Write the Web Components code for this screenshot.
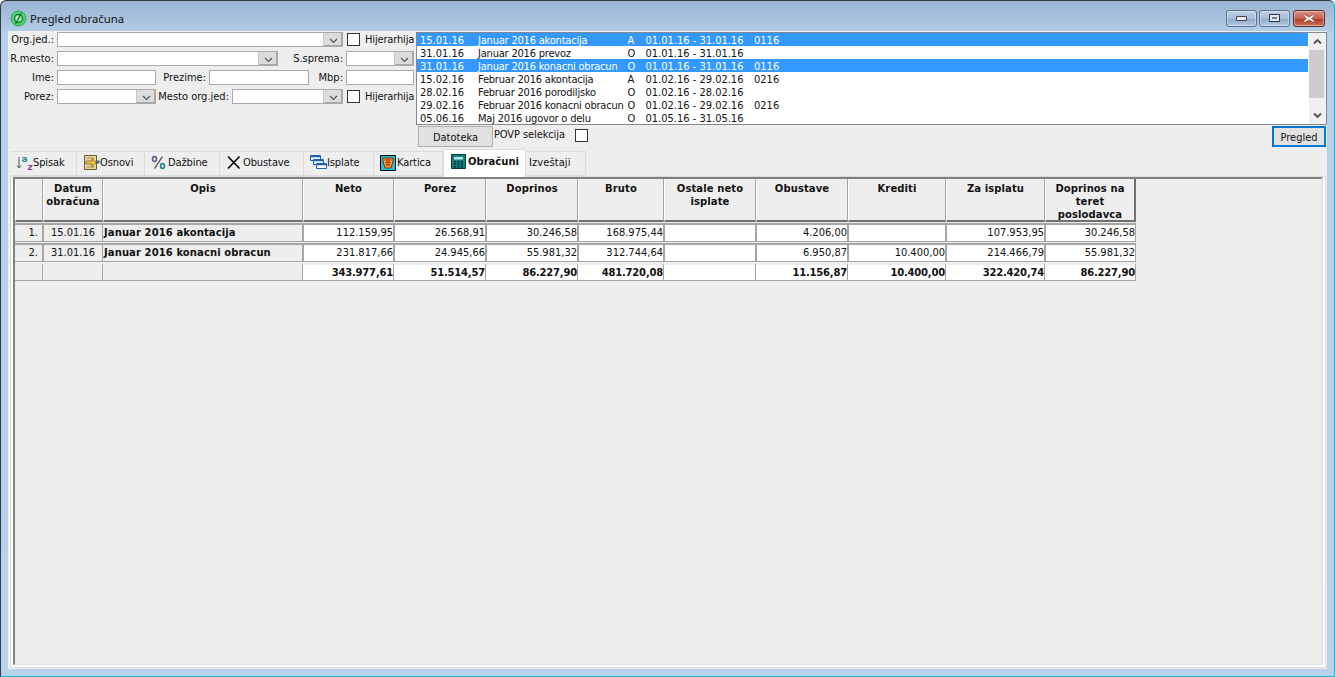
<!DOCTYPE html>
<html lang="sr">
<head>
<meta charset="UTF-8">
<title>Pregled obračuna</title>
<style>
    html, body { margin: 0; height: 100%; overflow: hidden; }
    body { font: 11px "DejaVu Sans Condensed", "DejaVu Sans", sans-serif; color: #111; }
</style>
</head>
<body>
<app-window title="Pregled obračuna">
    <filter-form></filter-form>
    <payroll-list slot="side"></payroll-list>
    <div slot="actions" style="display:contents">
        <ui-button>Datoteka</ui-button>
        <span style="margin-left:1px;width:81px;padding-top:2px;align-self:flex-start;letter-spacing:-.1px">POVP selekcija</span>
        <ui-check style="margin-top:3px;align-self:flex-start"></ui-check>
        <span style="flex:1"></span>
        <ui-button primary>Pregled</ui-button>
    </div>
    <tab-bar slot="tabs">
        <tab-item w="67"><svg slot="icon" width="17" height="18" viewBox="0 0 17 18"><path d="M3 3v11M1 11.500l2 2.500 2-2.500" fill="none" stroke="#555" stroke-width="1"/><text x="5.500" y="8" font-family="DejaVu Sans" font-weight="700" font-size="9" fill="#1a8f8f">a</text><text x="11.500" y="16" font-family="DejaVu Sans" font-weight="700" font-size="9" fill="#8a3f98">z</text></svg>Spisak</tab-item>
        <tab-item w="68"><svg slot="icon" width="17" height="17" viewBox="0 0 17 17"><path d="M1.500 1.500h12v14h-12z" fill="#ecd9a4" stroke="#6b5a2c"/><path d="M3.500 4h8M3.500 13h8" stroke="#a58a48"/><path d="M3 7h6V4.500l4.500 4-4.500 4V10H3z" fill="#f4c542" stroke="#7a5a16" stroke-width=".8"/><path d="M14 6.500h2.500v3H14z" fill="#2a6fc0"/></svg>Osnovi</tab-item>
        <tab-item w="75"><svg slot="icon" width="17" height="17" viewBox="0 0 17 17"><ellipse cx="3.500" cy="5" rx="2" ry="2.400" fill="none" stroke="#6a4a9c" stroke-width="1.500"/><ellipse cx="11.500" cy="12" rx="2" ry="2.400" fill="none" stroke="#1a7f8f" stroke-width="1.500"/><path d="M11.500 2.500L3.500 14.500" stroke="#444" stroke-width="1.300"/></svg>Dažbine</tab-item>
        <tab-item w="84"><svg slot="icon" width="17" height="17" viewBox="0 0 17 17"><path d="M2 2.500l11.500 12M13.500 2.500L2 14.500" stroke="#000" stroke-width="1.600"/></svg>Obustave</tab-item>
        <tab-item w="70"><svg slot="icon" width="17" height="17" viewBox="0 0 17 17"><g fill="#eef3fa" stroke="#1f5fae"><path d="M.5 1.500h10v5H.5z"/><path d="M3.500 5.500h10v5h-10z"/><path d="M6.500 9.500h10v5h-10z" fill="#fff"/></g><path d="M1 2.500h9M4 6.500h9M7 10.500h9" stroke="#1f5fae" stroke-width="1.500"/></svg>Isplate</tab-item>
        <tab-item w="69"><svg slot="icon" width="17" height="16" viewBox="0 0 17 16"><path d="M.5.500h15v15H.5z" fill="#12c7d8" stroke="#000"/><path d="M3 3h10v3l-2 7H5L3 6z" fill="#f2c230" stroke="#8a1c1c"/><path d="M4 5h8M5 7.500h6M5.500 10h5M7 3.500v8M9 3.500v8" stroke="#c8281c" stroke-width="1.100"/></svg>Kartica</tab-item>
        <tab-item w="83" active><svg slot="icon" width="15" height="15" viewBox="0 0 15 15"><path d="M.5.500h14v14H.5z" fill="#0d7f80" stroke="#063a3c"/><path d="M3 3h9v2.500H3z" fill="#bfe6e6"/><path d="M3 7h2v1.500H3zM6.500 7h2v1.500h-2zM10 7h2v1.500h-2zM3 9.500h2V11H3zM6.500 9.500h2V11h-2zM10 9.500h2V11h-2zM3 12h2v1.500H3zM6.500 12h2v1.500h-2zM10 12h2v1.500h-2z" fill="#04282a"/></svg>Obračuni</tab-item>
        <tab-item w="60" style="padding-left:3px;letter-spacing:.1px">Izveštaji</tab-item>
    </tab-bar>
    <calc-grid slot="panel"></calc-grid>
</app-window>

<script>
    // form controls
    class UiCombo extends HTMLElement {
        constructor() {
            super();
            this.attachShadow({ mode: "open" }).innerHTML = /* html */ `
                <style>
                    :host { display: flex; box-sizing: border-box; height: 15px; border: 1px solid #a9a9a9; background: #fff; flex: none; }
                    .b { margin-left: auto; width: 18px; background: #dcdcdc; display: flex; align-items: center; justify-content: center; border-left: 1px solid #c8c8c8; box-shadow: inset -1px -1px 0 #a9a9a9; }
                    svg { display: block; margin-top: 2px; }
                </style>
                <div class="b"><svg width="9" height="6" viewBox="0 0 9 6"><path d="M1 1l3.500 3.500L8 1" fill="none" stroke="#555" stroke-width="1.200"/></svg></div>`;
            this.style.width = this.getAttribute("w") + "px";
        }
    }
    customElements.define("ui-combo", UiCombo);

    class UiEdit extends HTMLElement {
        constructor() {
            super();
            this.attachShadow({ mode: "open" }).innerHTML = `
                <style>:host { display: block; box-sizing: border-box; height: 15px; border: 1px solid #a9a9a9; background: #fff; flex: none; }</style>`;
            this.style.width = this.getAttribute("w") + "px";
        }
    }
    customElements.define("ui-edit", UiEdit);

    class UiCheck extends HTMLElement {
        constructor() {
            super();
            this.attachShadow({ mode: "open" }).innerHTML = `
                <style>:host { display: block; box-sizing: border-box; width: 13px; height: 13px; border: 1px solid #333; background: #fff; flex: none; }</style>`;
        }
    }
    customElements.define("ui-check", UiCheck);

    class UiButton extends HTMLElement {
        constructor() {
            super();
            this.attachShadow({ mode: "open" }).innerHTML = /* html */ `
                <style>
                    :host { display: flex; align-items: center; justify-content: center; box-sizing: border-box; width: 75px; height: 21px; border: 1px solid #adadad; background: #e1e1e1; flex: none; padding-top: 1px; }
                    :host([primary]) { width: 54px; border: 2px solid #0078d7; color: #111; }
                </style>
                <slot></slot>`;
        }
    }
    customElements.define("ui-button", UiButton);

    class FilterForm extends HTMLElement {
        constructor() {
            super();
            this.attachShadow({ mode: "open" }).innerHTML = /* html */ `
                <style>
                    :host { display: flex; flex-direction: column; gap: 4px; width: 408px; flex: none; }
                    .r { display: flex; align-items: center; height: 15px; }
                    .l { flex: none; text-align: right; white-space: nowrap; padding-right: 3px; box-sizing: border-box; }
                    .h { margin-left: 5px; white-space: nowrap; letter-spacing: -.15px; }
                    ui-check { margin-left: 4px; }
                </style>
                <div class="r"><span class="l" style="width:49px">Org.jed.:</span><ui-combo w="286"></ui-combo><ui-check></ui-check><span class="h">Hijerarhija</span></div>
                <div class="r"><span class="l" style="width:49px">R.mesto:</span><ui-combo w="221"></ui-combo><span class="l" style="width:68px">S.sprema:</span><ui-combo w="68"></ui-combo></div>
                <div class="r"><span class="l" style="width:49px">Ime:</span><ui-edit w="99"></ui-edit><span class="l" style="width:53px">Prezime:</span><ui-edit w="100"></ui-edit><span class="l" style="width:37px">Mbp:</span><ui-edit w="68"></ui-edit></div>
                <div class="r"><span class="l" style="width:49px">Porez:</span><ui-combo w="99"></ui-combo><span class="l" style="width:76px">Mesto org.jed:</span><ui-combo w="111"></ui-combo><ui-check></ui-check><span class="h">Hijerarhija</span></div>`;
        }
    }
    customElements.define("filter-form", FilterForm);

    class PayrollList extends HTMLElement {
        constructor() {
            super();
            const rows = [
                ["15.01.16", "Januar 2016 akontacija", "A", "01.01.16 - 31.01.16", "0116", 1],
                ["31.01.16", "Januar 2016 prevoz", "O", "01.01.16 - 31.01.16", ""],
                ["31.01.16", "Januar 2016 konacni obracun", "O", "01.01.16 - 31.01.16", "0116", 1],
                ["15.02.16", "Februar 2016 akontacija", "A", "01.02.16 - 29.02.16", "0216"],
                ["28.02.16", "Februar 2016 porodiljsko", "O", "01.02.16 - 28.02.16", ""],
                ["29.02.16", "Februar 2016 konacni obracun", "O", "01.02.16 - 29.02.16", "0216"],
                ["05.06.16", "Maj 2016 ugovor o delu", "O", "01.05.16 - 31.05.16", ""]
            ];
            const html = rows.map(r => `
                <div class="row${r[5] ? " sel" : ""}"><span>${r[0]}</span><span class="d">${r[1]}</span><span>${r[2]}</span><span>${r[3]}</span><span>${r[4]}</span></div>`).join("");
            this.attachShadow({ mode: "open" }).innerHTML = /* html */ `
                <style>
                    :host { display: flex; flex: 1; box-sizing: border-box; height: 93px; border: 1px solid #828790; background: #fff; overflow: hidden; }
                    .rows { flex: 1; overflow: hidden; }
                    .row { display: grid; grid-template-columns: 58px 149.500px 18px 108.500px 1fr; height: 13px; line-height: 15px; padding-left: 3px; white-space: nowrap; }
                    .d { letter-spacing: -.2px; }
                    .sel { background: #3399ff; color: #fff; }
                    .sb { width: 18px; background: #f0f0f0; display: flex; flex-direction: column; align-items: stretch; border-left: 1px solid #fff; box-sizing: border-box; }
                    .arr { height: 17px; display: flex; align-items: center; justify-content: center; }
                    .thumb { height: 48px; background: #cdcdcd; margin-right: 2px; }
                    .sp { flex: 1; }
                </style>
                <div class="rows">${html}</div>
                <div class="sb">
                    <div class="arr"><svg width="9" height="7" viewBox="0 0 9 7"><path d="M1 5.500l3.500-3.500L8 5.500" fill="none" stroke="#505050" stroke-width="1.800"/></svg></div>
                    <div class="thumb"></div>
                    <div class="sp"></div>
                    <div class="arr"><svg width="9" height="7" viewBox="0 0 9 7"><path d="M1 1.500L4.500 5 8 1.500" fill="none" stroke="#505050" stroke-width="1.800"/></svg></div>
                </div>`;
        }
    }
    customElements.define("payroll-list", PayrollList);

    class TabBar extends HTMLElement {
        constructor() {
            super();
            this.attachShadow({ mode: "open" }).innerHTML = `
                <style>:host { display: flex; align-items: flex-end; height: 27px; padding-left: 2px; position: relative; z-index: 1; }</style>
                <slot></slot>`;
        }
    }
    customElements.define("tab-bar", TabBar);

    class TabItem extends HTMLElement {
        constructor() {
            super();
            this.attachShadow({ mode: "open" }).innerHTML = /* html */ `
                <style>
                    :host { display: flex; align-items: center; box-sizing: border-box; height: 25px; border: 1px solid #dcdcdc; border-left: 0; padding-left: 6px; padding-bottom: 2px; letter-spacing: -.1px; white-space: nowrap; background: #eee; flex: none; }
                    :host([active]) { height: 28px; margin-bottom: -1px; background: #fff; border: 1px solid #dcdcdc; border-bottom: 0; font-weight: 700; gap: 2px; padding-left: 7px; padding-bottom: 5px; font-family: "DejaVu Sans"; font-size: 10px; letter-spacing: 0; }
                    slot[name=icon]::slotted(*) { flex: none; }
                </style>
                <slot name="icon"></slot><slot></slot>`;
            this.style.width = this.getAttribute("w") + "px";
        }
    }
    customElements.define("tab-item", TabItem);

    class CalcGrid extends HTMLElement {
        constructor() {
            super();
            const head = ["", "Datum obračuna", "Opis", "Neto", "Porez", "Doprinos", "Bruto", "Ostale neto isplate", "Obustave", "Krediti", "Za isplatu", "Doprinos na teret poslodavca"];
            const rows = [
                ["1.", "15.01.16", "Januar 2016 akontacija", "112.159,95", "26.568,91", "30.246,58", "168.975,44", "", "4.206,00", "", "107.953,95", "30.246,58"],
                ["2.", "31.01.16", "Januar 2016 konacni obracun", "231.817,66", "24.945,66", "55.981,32", "312.744,64", "", "6.950,87", "10.400,00", "214.466,79", "55.981,32"]
            ];
            const total = ["", "", "", "343.977,61", "51.514,57", "86.227,90", "481.720,08", "", "11.156,87", "10.400,00", "322.420,74", "86.227,90"];
            const cls = i => i === 0 ? "idx" : i === 1 ? "date" : i === 2 ? "opis" : "val";
            this.attachShadow({ mode: "open" }).innerHTML = /* html */ `
                <style>
                    :host { display: block; flex: 1; box-sizing: border-box; border-top: 2px solid #808080; border-left: 2px solid #808080; border-right: 2px solid #e3e3e3; border-bottom: 1px solid #e3e3e3; background: #eee; }
                    .g { display: grid; grid-template-columns: 28px 60px 200px 91px 92px 92px 86px 92px 92px 98px 99px 91px; grid-template-rows: 43px 19px 19px 18px; row-gap: 1px; width: max-content; }
                    .g > div { box-sizing: border-box; border-right: 1px solid #a5a5a5; overflow: hidden; white-space: nowrap; }
                    .h { font: 700 10px/13px "DejaVu Sans", sans-serif; letter-spacing: .1px; text-align: center; white-space: normal !important; padding: 3px 2px 0; background: #eee; border-left: 1px solid #fff; border-bottom: 2px solid #707070; color: #111; }
                    .h.last { border-right: 2px solid #707070 !important; }
                    .c { line-height: 15px; border-top: 2px solid #a5a5a5; border-bottom: 1px solid #a5a5a5; }
                    .idx { background: #eee; text-align: right; padding-right: 4px; }
                    .date { background: #eee; text-align: right; padding-right: 7px; border-left: 1px solid #a5a5a5; }
                    .opis { background: #eee; font: 700 10px/15px "DejaVu Sans", sans-serif; letter-spacing: .1px; padding-left: 1px; }
                    .val { background: #fff; text-align: right; padding-right: 0; border-left: 1px solid #a5a5a5; }
                    .t { border-bottom: 1px solid #a5a5a5; background: #eee; border-top: 2px solid #eee; }
                    .t.v { background: #fff; font: 700 10px/15px "DejaVu Sans", sans-serif; letter-spacing: -.2px; text-align: right; padding-right: 0; }
                </style>
                <div class="g">
                    ${head.map((h, i) => `<div class="h${i === 11 ? " last" : ""}">${h}</div>`).join("")}
                    ${rows.map(r => r.map((v, i) => `<div class="c ${cls(i)}">${v}</div>`).join("")).join("")}
                    ${total.map((v, i) => `<div class="t${i > 2 ? " v" : ""}">${v}</div>`).join("")}
                </div>`;
        }
    }
    customElements.define("calc-grid", CalcGrid);

    class AppWindow extends HTMLElement {
        constructor() {
            super();
            this.attachShadow({ mode: "open" }).innerHTML = /* html */ `
                <style>
                    :host { display: flex; flex-direction: column; box-sizing: border-box; width: 1335px; height: 677px; padding: 0 7px 7px 7px; border: 1px solid #2f3a44; border-right-color: #19b9c9; border-bottom-color: #19b9c9; border-radius: 6px 6px 0 0; background: linear-gradient(#9ab4d2 0, #b6cfea 34px, #b8d2ec 100%); }
                    .title { display: flex; align-items: center; height: 30px; flex: none; font: 11.300px "Noto Sans", "Open Sans", sans-serif; color: #111; gap: 3px; padding-left: 2px; padding-top: 4px; box-sizing: border-box; }
                    .btns { margin-left: auto; display: flex; gap: 2px; align-self: flex-start; margin-top: 5px; margin-right: 2px; }
                    .btn { width: 31px; height: 17px; box-sizing: border-box; border: 1px solid #5f7186; border-radius: 3px; background: linear-gradient(#bdd0e6 0, #a6bed9 50%, #8fa9c6 51%, #b0c7e0 100%); display: flex; align-items: center; justify-content: center; box-shadow: inset 0 0 0 1px rgba(255,255,255,.4); }
                    .close { width: 32px; margin-left: 1px; background: linear-gradient(#d88f82 0, #c8604e 50%, #ac3822 51%, #cf7058 100%); border-color: #5a2a2a; }
                    .client { flex: 1; display: flex; flex-direction: column; background: #eee; padding-top: 1px; min-height: 0; }
                    .top { display: flex; flex: none; height: 93px; }
                    .actions { display: flex; flex: none; height: 21px; margin: 1px 1px 0 410px; align-items: flex-start; }
                    .tabs { flex: none; margin-top: 2px; margin-left: 0; }
                    .panel { flex: 1; display: flex; margin: 0 1px 1px 2px; padding: 0 2px 2px 2px; background: #fff; border: 1px solid #dcdcdc; min-height: 0; }
                </style>
                <div class="title">
                    <svg width="17" height="17" viewBox="0 0 17 17"><circle cx="8.500" cy="8.500" r="7.500" fill="#4fd468" stroke="#2aa45a"/><circle cx="8.500" cy="8.500" r="4" fill="#a6ecb0" stroke="#0f7a3a" stroke-width="1.400"/><path d="M11.500 3L5.500 14" stroke="#0f7a3a" stroke-width="1.400"/></svg>
                    <span>${this.getAttribute("title")}</span>
                    <div class="btns">
                        <div class="btn"><svg width="11" height="6"><path d="M.5 .5h10v4H.5z" fill="#eee" stroke="#445"/></svg></div>
                        <div class="btn"><svg width="11" height="9"><path d="M.5 .5h10v7H.5z" fill="#dfe8f2" stroke="#334"/><path d="M3 3h5v2H3z" fill="#6a7f99"/></svg></div>
                        <div class="btn close"><svg width="12" height="9" viewBox="0 0 12 9"><path d="M1.500 .5L6 3l4.500-2.500 1 1.500L8.500 4.500l3 2.500-1 1.500L6 6 1.500 8.500l-1-1.500 3-2.500-3-2.500z" fill="#f4f0ee" stroke="#7a3a30" stroke-width=".6"/></svg></div>
                    </div>
                </div>
                <div class="client">
                    <div class="top"><slot></slot><slot name="side"></slot></div>
                    <div class="actions"><slot name="actions"></slot></div>
                    <div class="tabs"><slot name="tabs"></slot></div>
                    <div class="panel"><slot name="panel"></slot></div>
                </div>`;
        }
    }
    customElements.define("app-window", AppWindow);
</script>
</body>
</html>
